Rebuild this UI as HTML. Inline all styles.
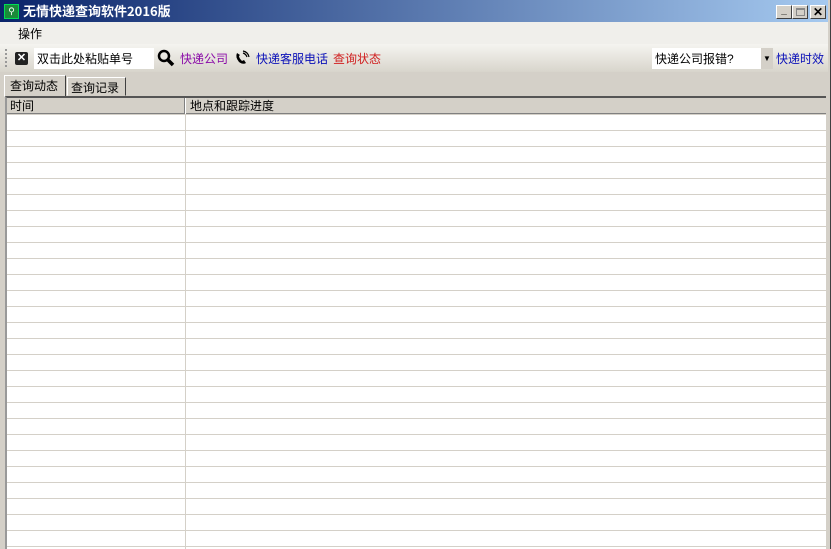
<!DOCTYPE html><html><head><meta charset="utf-8"><style>
*{margin:0;padding:0;box-sizing:border-box}
body{width:831px;height:549px;overflow:hidden;background:#d4d0c8;font-family:"Liberation Sans","Noto Sans CJK SC",sans-serif;font-size:12px;position:relative}
.a{position:absolute;white-space:nowrap}
</style></head><body>
<div class="a" style="left:0;top:0;width:831px;height:22px;background:linear-gradient(90deg,#0a246a,#a6caf0)"></div>
<div class="a" style="left:4px;top:4px;width:15px;height:15px;background:#1a8a3a;border:1px solid #0d5;color:#fff;font-size:9px;line-height:13px;text-align:center">⚲</div>
<div class="a" style="left:23px;top:3px;color:#fff;font-weight:bold;font-size:13px;line-height:16px;font-family:'Noto Sans CJK SC','Liberation Sans',sans-serif">无情快递查询软件2016版</div>
<div class="a" style="left:776px;top:5px;width:16px;height:14px;background:#d4d0c8;border:1px solid;border-color:#fff #404040 #404040 #fff;font-size:10px;line-height:10px;text-align:center;font-weight:bold">_</div>
<div class="a" style="left:792px;top:5px;width:16px;height:14px;background:#d4d0c8;border:1px solid;border-color:#fff #404040 #404040 #fff"><div style="margin:2px 3px;width:9px;height:8px;border:1px solid #888;border-top-width:2px"></div></div>
<div class="a" style="left:810px;top:5px;width:16px;height:14px;background:#d4d0c8;border:1px solid;border-color:#fff #404040 #404040 #fff;font-size:12px;line-height:12px;text-align:center;font-weight:bold">✕</div>
<div class="a" style="left:0;top:22px;width:831px;height:22px;background:#f0efeb"></div>
<div class="a" style="left:18px;top:25px;font-size:12px">操作</div>
<div class="a" style="left:0;top:44px;width:831px;height:28px;background:linear-gradient(#f5f4f0,#d8d5cc)"></div>
<div class="a" style="left:5px;top:49px;width:2px;height:18px;border-left:2px dotted #999"></div>
<div class="a" style="left:15px;top:52px;width:13px;height:13px;background:#222;border-radius:2px;color:#fff;font-size:11px;line-height:13px;text-align:center;font-weight:bold">✕</div>
<div class="a" style="left:34px;top:48px;width:120px;height:21px;background:#fff;font-size:12px;padding:2px 3px">双击此处粘贴单号</div>
<svg class="a" style="left:157px;top:49px" width="18" height="18"><circle cx="7" cy="7" r="5" fill="none" stroke="#000" stroke-width="2.5"/><path d="M11 11L16 16" stroke="#000" stroke-width="3.5"/></svg>
<div class="a" style="left:180px;top:50px;color:#8a0aa8">快递公司</div>
<svg class="a" style="left:234px;top:50px" width="16" height="16"><path d="M3 3Q1 7 5 12Q9 15 12 13L10 10L8 11Q5 8 5 6L6 5Z" fill="#000"/><path d="M9 3Q12 4 13 7M9 1Q14 2 15 7" stroke="#000" fill="none" stroke-width="1.2"/></svg>
<div class="a" style="left:256px;top:50px;color:#0a10b8">快递客服电话</div>
<div class="a" style="left:333px;top:50px;color:#d02020">查询状态</div>
<div class="a" style="left:652px;top:48px;width:120px;height:21px;background:#fff;font-size:12px;padding:2px 3px">快递公司报错?</div>
<div class="a" style="left:761px;top:48px;width:12px;height:21px;background:#d4d0c8;font-size:8px;line-height:21px;text-align:center">▼</div>
<div class="a" style="left:776px;top:50px;color:#0a10b8">快递时效</div>
<div class="a" style="left:4px;top:75px;width:62px;height:22px;background:#d4d0c8;border:1px solid;border-color:#fff #404040 transparent #fff;font-size:12px;padding:1px 5px">查询动态</div>
<div class="a" style="left:67px;top:77px;width:59px;height:19px;border:1px solid;border-color:#fff #404040 transparent #fff;font-size:12px;padding:1px 3px">查询记录</div>
<div class="a" style="left:5px;top:96px;width:823px;height:453px;background:#fff;border-top:2px solid #555;border-left:2px solid #999;
background-image:linear-gradient(#d4d0c8 1px,transparent 1px);background-size:100% 16px;background-position:0 16px"></div>
<div class="a" style="left:185px;top:98px;width:1px;height:451px;background:#d4d0c8"></div>
<div class="a" style="left:7px;top:98px;width:819px;height:16px;background:#d4d0c8;border-bottom:1px solid #808080"></div>
<div class="a" style="left:184px;top:98px;width:1px;height:16px;background:#808080"></div>
<div class="a" style="left:185px;top:98px;width:1px;height:16px;background:#fff"></div>
<div class="a" style="left:10px;top:99px;font-size:12px;line-height:15px">时间</div>
<div class="a" style="left:190px;top:99px;font-size:12px;line-height:15px">地点和跟踪进度</div>
<div class="a" style="left:826px;top:96px;width:2px;height:453px;background:#d4d0c8"></div>
<div class="a" style="left:828px;top:0;width:3px;height:549px;background:#d4d0c8;border-right:1px solid #404040"></div>
</body></html>
